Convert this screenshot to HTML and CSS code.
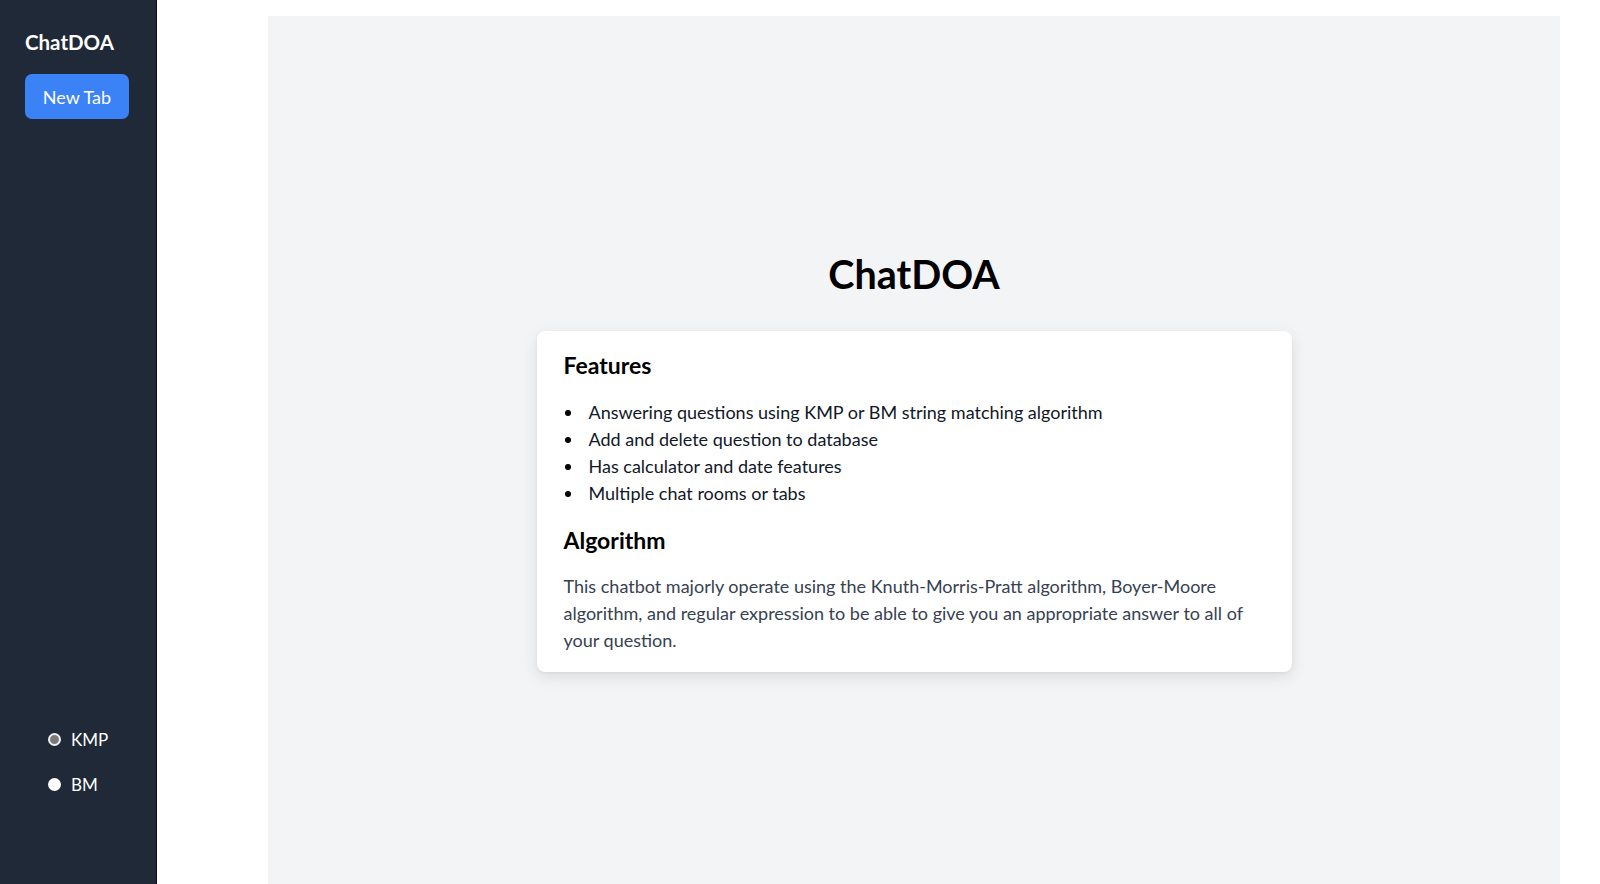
FILE: index.html
```html
<!DOCTYPE html>
<html lang="en">
<head>
<meta charset="utf-8">
<title>ChatDOA</title>
<link rel="stylesheet" href="styles.css">
</head>
<body>
  <aside class="sidebar">
    <div class="brand">ChatDOA</div>
    <button class="new-tab">New Tab</button>
    <div class="algo-select">
      <label class="algo-option">
        <span class="radio radio-kmp"></span>
        <span class="algo-label">KMP</span>
      </label>
      <label class="algo-option">
        <span class="radio radio-bm"></span>
        <span class="algo-label">BM</span>
      </label>
    </div>
  </aside>
  <main class="main">
    <section class="panel">
      <h1 class="title">ChatDOA</h1>
      <div class="card">
        <h2 class="card-heading">Features</h2>
        <ul class="feature-list">
          <li>Answering questions using KMP or BM string matching algorithm</li>
          <li>Add and delete question to database</li>
          <li>Has calculator and date features</li>
          <li>Multiple chat rooms or tabs</li>
        </ul>
        <h2 class="card-heading algo-heading">Algorithm</h2>
        <p class="card-text">This chatbot majorly operate using the Knuth-Morris-Pratt algorithm, Boyer-Moore algorithm, and regular expression to be able to give you an appropriate answer to all of your question.</p>
      </div>
    </section>
  </main>
</body>
</html>
```
FILE: styles.css
```css
* {
  box-sizing: border-box;
}

html, body {
  margin: 0;
  height: 100%;
}

body {
  display: flex;
  font-family: Lato, "Liberation Sans", sans-serif;
  background: #ffffff;
  overflow: hidden;
}

.sidebar {
  width: 157px;
  flex: 0 0 157px;
  height: 884px;
  background: #1f2937;
  border-right: 1px solid #0a0e14;
  display: flex;
  flex-direction: column;
  padding: 28px 0 88px 25px;
}

.brand {
  color: #ffffff;
  font-size: 20.5px;
  font-weight: 700;
  line-height: 28px;
}

.new-tab {
  margin-top: 18px;
  width: 104px;
  height: 45px;
  background: #3b82f6;
  color: #ffffff;
  border: none;
  border-radius: 7px;
  font-family: inherit;
  font-size: 18px;
  padding: 0;
  cursor: pointer;
}

.algo-select {
  margin-top: auto;
  display: flex;
  flex-direction: column;
  gap: 21px;
  padding-left: 23px;
}

.algo-option {
  display: flex;
  align-items: center;
  height: 24px;
  color: #ffffff;
  font-size: 17px;
}

.radio {
  width: 13px;
  height: 13px;
  border-radius: 50%;
  margin-right: 10px;
  flex: 0 0 13px;
}

.radio-kmp {
  background: #7a7a7a;
  border: 2.5px solid #f0f0f0;
}

.radio-bm {
  background: #ffffff;
}

.main {
  flex: 1;
  height: 884px;
  padding: 16px 40px 0 111px;
}

.panel {
  height: 100%;
  background: #f3f4f6;
  display: flex;
  flex-direction: column;
  align-items: center;
  padding-top: 238px;
}

.title {
  margin: 0;
  font-size: 39.5px;
  line-height: 40px;
  font-weight: 700;
  color: #000000;
}

.card {
  margin-top: 37px;
  width: 755px;
  background: #ffffff;
  border-radius: 8px;
  box-shadow: 0 5px 15px rgba(0, 0, 0, 0.1), 0 1px 3px rgba(0, 0, 0, 0.05);
  padding: 20px 26px 18px 27px;
}

.card-heading {
  margin: 0;
  font-size: 23px;
  line-height: 28px;
  font-weight: 700;
  color: #000000;
}

.feature-list {
  list-style: none;
  margin: 20px 0 0;
  padding: 0;
}

.feature-list li {
  display: flex;
  align-items: center;
  font-size: 18px;
  line-height: 27px;
  color: #111827;
}

.feature-list li::before {
  content: "";
  width: 6px;
  height: 6px;
  border-radius: 50%;
  background: #000000;
  margin: 0 18px 0 1px;
  flex: 0 0 6px;
}

.algo-heading {
  margin-top: 19px;
}

.card-text {
  margin: 19px 0 0;
  font-size: 18px;
  line-height: 27px;
  color: #374151;
}
```
